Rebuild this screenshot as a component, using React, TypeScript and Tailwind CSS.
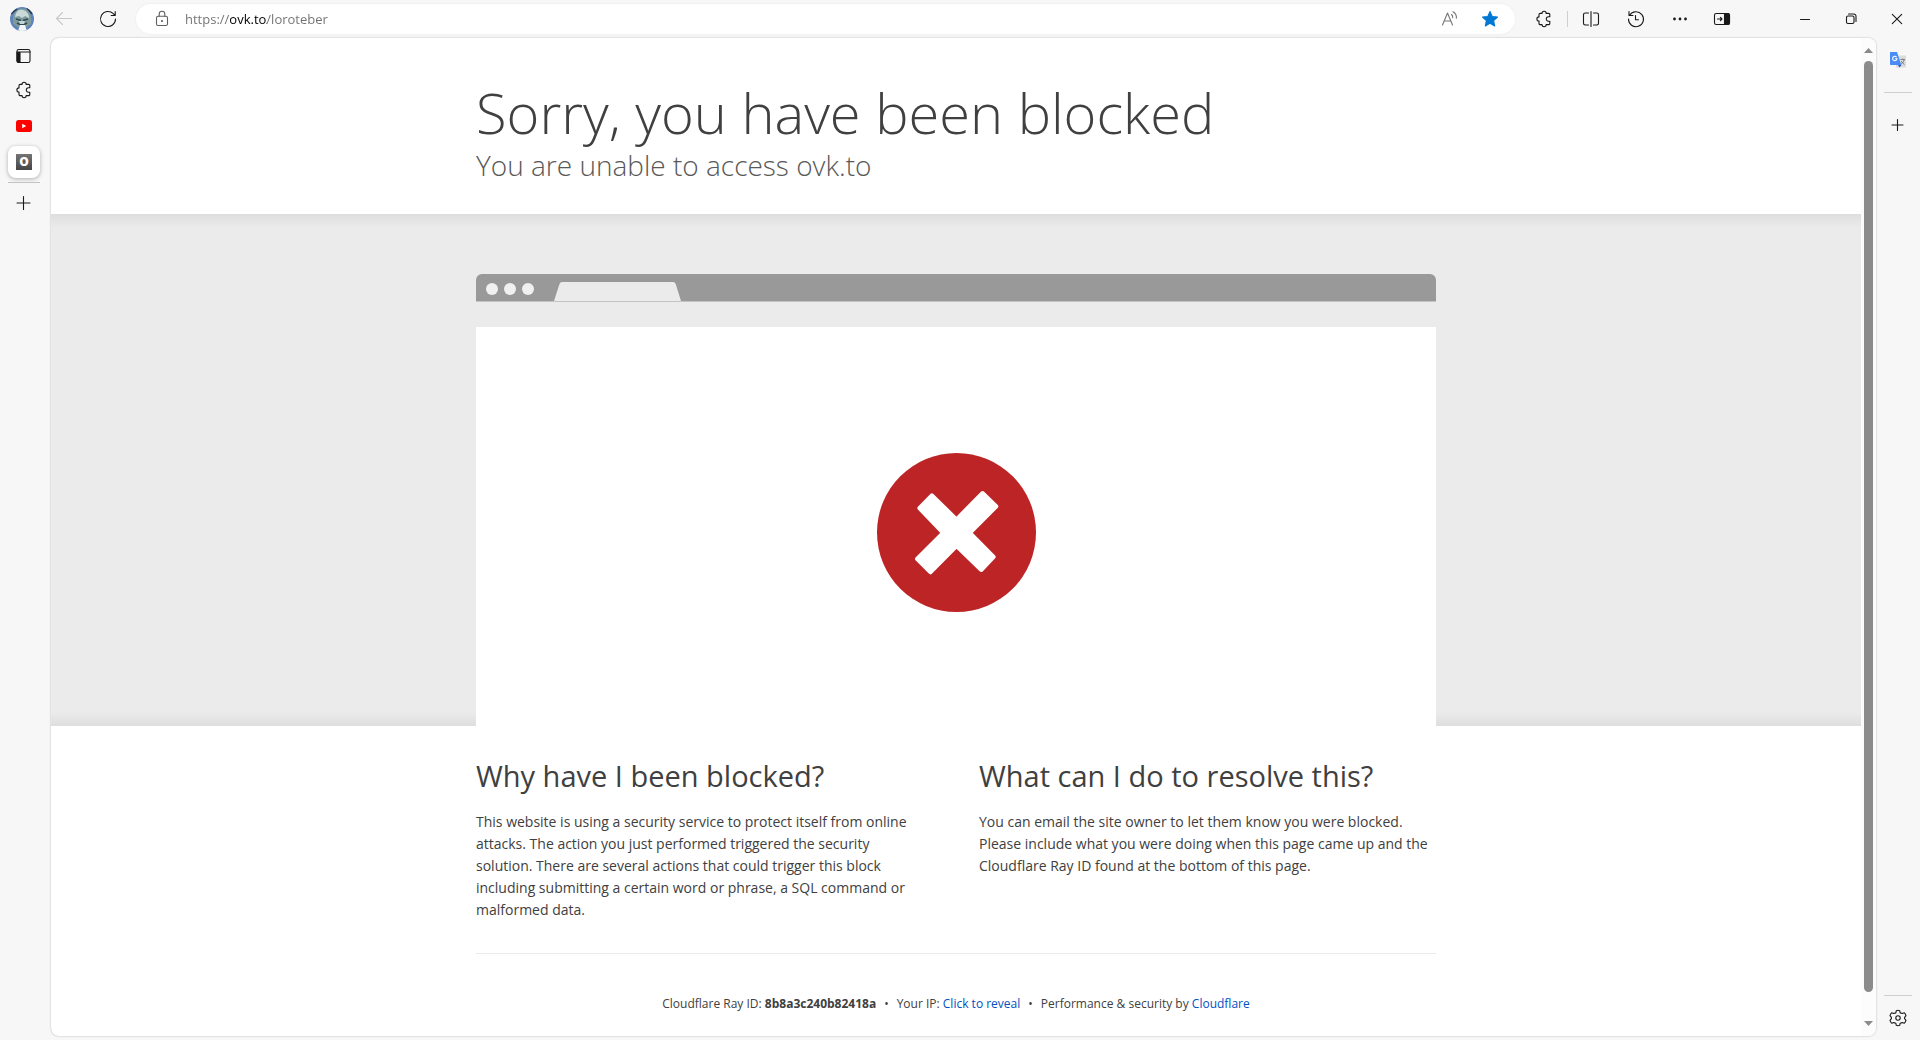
import React from 'react';

/* ── Toolbar icons (20px box) ────────────────────────────── */
const Icon = ({ children, className = '' }: { children: React.ReactNode; className?: string }) => (
  <svg
    width="20"
    height="20"
    viewBox="0 0 20 20"
    fill="none"
    stroke="currentColor"
    strokeWidth="1.1"
    strokeLinecap="round"
    strokeLinejoin="round"
    className={className}
    aria-hidden="true"
  >
    {children}
  </svg>
);

const PuzzleIcon = () => (
  <Icon>
    <path d="M8 4.400a2.100 2.100 0 0 1 4.200 0H14.600a1.200 1.200 0 0 1 1.200 1.200V7.800h-1.300a2.200 2.200 0 0 0 0 4.400h1.300v2.200a1.200 1.200 0 0 1-1.200 1.200h-2.400a2.100 2.100 0 0 1-4.200 0H6.200A1.200 1.200 0 0 1 5 14.400v-2.300a2.100 2.100 0 0 1 0-4.200V5.600a1.200 1.200 0 0 1 1.200-1.200z" />
  </Icon>
);

const Avatar = () => (
  <svg width="24" height="24" viewBox="0 0 24 24" aria-hidden="true">
    <defs>
      <clipPath id="avatar">
        <circle cx="12" cy="12" r="12" />
      </clipPath>
    </defs>
    <g clipPath="url(#avatar)">
      <rect width="24" height="24" fill="#5f83bd" />
      <path d="M3 17C2 9 4 2 12 1.5S22 9 21 17l-4 3H8z" fill="#7f9b9c" />
      <path d="M5 10C6 4 9 2 13 3s6 4 6 8l-4-2-3 2-3-2z" fill="#c9dad8" />
      <path d="M1 7l6-5M17 1l5 6" stroke="#27394d" strokeWidth="1.5" />
      <path d="M6 12l5 1.5M13 13.5l5-1.5M7 16c3 2 7 2 10 0" stroke="#2f4b52" strokeWidth="1.8" fill="none" />
      <path d="M9 14h6l-1 3h-4z" fill="#c4d5d4" />
      <path d="M8 24l2-6h5l2 6z" fill="#f3f6f6" />
    </g>
  </svg>
);

const TranslateIcon = () => (
  <svg width="16" height="16" viewBox="0 0 16 16" aria-hidden="true">
    <rect x="6" y="3.5" width="10" height="12" rx="0.5" fill="#dcdcdc" />
    <path
      d="M10.500 7.500h4.500M12.700 6.500v1M14.200 7.500c-.5 2.500-1.800 4-3.700 5M11.300 9c.6 1.500 1.700 2.700 3.200 3.500"
      stroke="#6f7a80"
      strokeWidth="0.9"
      fill="none"
    />
    <path d="M8 13h3.500L9.500 15.500z" fill="#2a56c6" />
    <path d="M.7 0H7l4.300 13H.7A.7.7 0 0 1 0 12.300V.7A.7.7 0 0 1 .7 0z" fill="#4a8cf7" />
    <path d="M6.600 5.200A2.200 2.200 0 1 0 7 6.700H4.900" stroke="#fff" strokeWidth="1.1" fill="none" />
  </svg>
);

/* ── Buttons ─────────────────────────────────────────────── */
const ToolButton = ({
  label,
  className,
  children,
}: {
  label: string;
  className: string;
  children: React.ReactNode;
}) => (
  <button type="button" aria-label={label} className={`flex shrink-0 items-center justify-center ${className}`}>
    {children}
  </button>
);

/* ── Top bar ─────────────────────────────────────────────── */
const Toolbar = () => (
  <header className="flex h-[38px] shrink-0 items-center pl-[10px]">
    <ToolButton label="Profile" className="mr-2">
      <Avatar />
    </ToolButton>
    <ToolButton label="Back" className="h-8 w-11 text-[#c8c8c8]">
      <Icon>
        <path d="M2.5 9.5h15M8.5 3.5l-6 6 6 6" />
      </Icon>
    </ToolButton>
    <ToolButton label="Refresh" className="h-8 w-11">
      <Icon>
        <path d="M17.5 10a7.5 7.5 0 1 1-2.200-5.300l1.700 1.600M17.200 2.500v4h-4" />
      </Icon>
    </ToolButton>

    <div className="ml-[6px] flex h-[30px] flex-1 items-center rounded-full bg-white pr-[5px] shadow-[0_0_3px_rgba(0,0,0,0.06)]">
      <ToolButton label="View site information" className="h-7 w-[49px] pl-[3px] text-[#5f5f5f]">
        <Icon>
          <rect x="4.500" y="7.300" width="11" height="9.200" rx="1.600" />
          <path d="M7.200 7.300V5a2.800 2.800 0 0 1 5.600 0v2.300" />
          <circle cx="10" cy="12" r="0.500" fill="currentColor" />
        </Icon>
      </ToolButton>
      {/* gradient stops give the host its darker tone */}
      <input
        type="text"
        aria-label="Address and search bar"
        defaultValue="https://ovk.to/loroteber"
        className="h-7 min-w-0 flex-1 bg-[linear-gradient(90deg,#707070_45px,#000_45px,#000_82px,#707070_82px)] bg-clip-text text-[13px] text-transparent outline-none"
      />
      <ToolButton label="Read aloud" className="h-7 w-10 text-[#767676]">
        <Icon>
          <path d="M2.500 16L7.500 4l5 12M4.300 12h6.400M11.500 5.500c.9.800 1.300 1.900 1.200 3.200M13 2.800c2.500 1.500 3.700 3.600 3.400 6.500" />
        </Icon>
      </ToolButton>
      <ToolButton label="Edit favorite" className="h-7 w-10 text-[#0078d4]">
        <Icon>
          <path
            d="M10 2.600l2.200 4.900 5.300.6-3.900 3.600 1.100 5.300-4.700-2.700L5.300 17l1.100-5.300-3.900-3.600 5.300-.6z"
            fill="currentColor"
          />
        </Icon>
      </ToolButton>
    </div>

    <ToolButton label="Extensions" className="ml-[6px] h-8 w-[46px]">
      <PuzzleIcon />
    </ToolButton>
    <div className="h-4 w-px bg-[#cfcfcf]" />
    <ToolButton label="Split screen" className="h-8 w-[46px]">
      <Icon>
        <path d="M10 2.500v15M7.500 4H4.200A1.700 1.700 0 0 0 2.500 5.700v8.600A1.700 1.700 0 0 0 4.200 16h3.300M12.500 4h3.300a1.700 1.700 0 0 1 1.700 1.700v8.600a1.700 1.700 0 0 1-1.700 1.700h-3.300" />
      </Icon>
    </ToolButton>
    <ToolButton label="History" className="h-8 w-11">
      <Icon>
        <path d="M3.600 6.300A7.500 7.500 0 1 1 2.500 10M3 2.500v4h4M9.500 6.500v4.200h3" />
      </Icon>
    </ToolButton>
    <ToolButton label="Settings and more" className="h-8 w-11">
      <Icon>
        <g fill="currentColor" stroke="none">
          <circle cx="4.500" cy="10" r="1.400" />
          <circle cx="10" cy="10" r="1.400" />
          <circle cx="15.500" cy="10" r="1.400" />
        </g>
      </Icon>
    </ToolButton>
    <ToolButton label="Hide sidebar" className="mr-10 h-8 w-10">
      <Icon>
        <rect x="2.500" y="4.500" width="15" height="11" rx="1.800" />
        <path d="M12.500 4.500h3.200a1.800 1.800 0 0 1 1.800 1.800v7.400a1.800 1.800 0 0 1-1.800 1.800h-3.200z" fill="currentColor" />
        <path d="M5.500 10h4.500M8.400 8.400L10 10l-1.600 1.600" />
      </Icon>
    </ToolButton>
    <ToolButton label="Minimize" className="h-8 w-[46px]">
      <Icon>
        <path d="M5.500 10.500h9" />
      </Icon>
    </ToolButton>
    <ToolButton label="Restore" className="h-8 w-[46px]">
      <Icon>
        <rect x="5.500" y="7" width="7.500" height="7.500" rx="1.500" />
        <path d="M7.500 5h5.300A2.200 2.200 0 0 1 15 7.200v5.300" />
      </Icon>
    </ToolButton>
    <ToolButton label="Close" className="h-8 w-[46px]">
      <Icon>
        <path d="M5.300 5.300l9.400 9.400M14.700 5.300l-9.400 9.400" />
      </Icon>
    </ToolButton>
  </header>
);

/* ── Vertical tabs ───────────────────────────────────────── */
const TabStrip = () => (
  <nav className="flex w-[51px] shrink-0 flex-col items-center pr-[3px]">
    <ToolButton label="Tab actions" className="mt-1 h-7 w-8">
      <Icon>
        <rect x="3" y="3.500" width="13" height="13" rx="1.800" />
        <path d="M3 6h13" />
        <path d="M3 6.500h3v10H4.800A1.800 1.800 0 0 1 3 14.700z" fill="currentColor" />
      </Icon>
    </ToolButton>
    <ToolButton label="Extensions" className="mt-[6px] h-7 w-8">
      <PuzzleIcon />
    </ToolButton>
    <ToolButton label="YouTube" className="mt-2 h-7 w-8">
      <svg width="16" height="12" viewBox="0 0 16 12" aria-hidden="true">
        <rect width="16" height="12" rx="2.5" fill="#f00" />
        <path d="M6.200 3.800v4.400L10.200 6z" fill="#fff" />
      </svg>
    </ToolButton>
    <ToolButton
      label="ovk.to"
      className="mt-[6px] h-8 w-8 rounded-lg bg-white shadow-[0_1px_4px_rgba(0,0,0,0.3)]"
    >
      <span className="flex h-4 w-4 items-center justify-center bg-linear-to-b from-[#757575] to-[#454545] text-xs leading-none font-extrabold text-white">
        O
      </span>
    </ToolButton>
    <div className="mt-1 h-px w-8 bg-[#c4c4c4]" />
    <ToolButton label="New tab" className="mt-[6px] h-7 w-8">
      <Icon>
        <path d="M9.500 3.500v13M3 10h13" />
      </Icon>
    </ToolButton>
  </nav>
);

/* ── Right sidebar ───────────────────────────────────────── */
const Sidebar = () => (
  <aside className="flex w-11 shrink-0 flex-col items-center">
    <ToolButton label="Google Translate" className="mt-2 h-7 w-8">
      <TranslateIcon />
    </ToolButton>
    <div className="mt-[18px] h-px w-7 bg-[#cfcfcf]" />
    <ToolButton label="Customize" className="mt-[18px] h-7 w-8">
      <Icon>
        <path d="M9.500 4.500v11M4 10h11" />
      </Icon>
    </ToolButton>
    <div className="mt-auto h-px w-7 bg-[#cfcfcf]" />
    <ToolButton label="Settings" className="mt-2 mb-1 h-7 w-8">
      <Icon>
        <circle cx="10" cy="10" r="2.200" />
        <path d="M8.300 2.700Q10 1.900 11.700 2.700L12.200 4.900 14.300 5.500 16.200 4.700Q17.500 5.800 18 7.700L16.600 9.300V10.700L18 12.300Q17.500 14.200 16.200 15.300L14.200 14.600 12.200 15.200 11.700 17.300Q10 18.100 8.300 17.300L7.800 15.200 5.800 14.600 3.800 15.300Q2.500 14.200 2 12.300L3.400 10.700V9.300L2 7.700Q2.500 5.800 3.800 4.700L5.700 5.500 7.800 4.900z" />
      </Icon>
    </ToolButton>
  </aside>
);

const Scrollbar = () => (
  <div className="flex w-[15px] shrink-0 flex-col items-center bg-[#fcfcfc] pt-[10px] pb-[10px]" aria-hidden="true">
    <svg width="9" height="5" viewBox="0 0 9 5">
      <path d="M4.500 0L9 5H0z" fill="#8b8b8b" />
    </svg>
    <div className="mt-2 mb-[29px] w-[9px] flex-1 rounded-full bg-[#8b8b8b]" />
    <svg width="9" height="5" viewBox="0 0 9 5">
      <path d="M4.500 5L0 0h9z" fill="#8b8b8b" />
    </svg>
  </div>
);

/* ── Blocked page ────────────────────────────────────────── */
const BrowserMock = () => (
  <div className="mx-auto w-full max-w-[960px]">
    <div className="flex h-7 items-end rounded-t-md border-b border-[#c4c4c4] bg-[#999]">
      <div className="flex gap-[6px] pb-[6px] pl-[10px]">
        <span className="h-3 w-3 rounded-full bg-[#f0f0f0]" />
        <span className="h-3 w-3 rounded-full bg-[#f0f0f0]" />
        <span className="h-3 w-3 rounded-full bg-[#f0f0f0]" />
      </div>
      <svg width="128" height="19" viewBox="0 0 128 19" className="ml-5" aria-hidden="true">
        <path d="M0 19L5.500 2Q6.200 0 8 0H119Q121 0 121.700 2L127 19z" fill="#ebebeb" />
      </svg>
    </div>
    <div className="mt-[25px] flex h-[399px] justify-center bg-white pt-[126px]">
      <svg width="159" height="159" viewBox="108 71 476 476" aria-hidden="true">
        <circle cx="346" cy="309" r="238" fill="#bd2426" />
        <path
          d="M272 199L346 271 424 192 464 231 385 310 456 382 420 420 346 348 268 427 229 388 307 310 236 236z"
          fill="#fff"
          stroke="#fff"
          strokeWidth="14"
          strokeLinejoin="round"
        />
      </svg>
    </div>
  </div>
);

const BlockedPage = () => (
  <div className="min-w-0 flex-1 text-[#404040]">
    <div className="mx-auto h-[176px] max-w-[960px] pt-[38px]">
      <h1 className="text-[56px] leading-[72px] font-light">Sorry, you have been blocked</h1>
      <h2 className="text-[28px] leading-[34px] font-light text-[#595959]">You are unable to access ovk.to</h2>
    </div>

    <section className="bg-[linear-gradient(180deg,#dedede_0px,#ebebeb_14px,#ebebeb_calc(100%-14px),#dedede_100%)] pt-[60px]">
      <BrowserMock />
    </section>

    <div className="mx-auto max-w-[960px]">
      <section className="grid grid-cols-2 gap-[46px] border-b border-[#ebebeb] pt-[31px] pb-8">
        <div>
          <h2 className="text-[29px] leading-[38px]">Why have I been blocked?</h2>
          <p className="mt-4 pr-3 text-[14px] leading-[22px]">
            This website is using a security service to protect itself from online attacks. The action you just
            performed triggered the security solution. There are several actions that could trigger this block
            including submitting a certain word or phrase, a SQL command or malformed data.
          </p>
        </div>
        <div>
          <h2 className="text-[29px] leading-[38px]">What can I do to resolve this?</h2>
          <p className="mt-4 text-[14px] leading-[22px]">
            You can email the site owner to let them know you were blocked. Please include what you were doing when
            this page came up and the Cloudflare Ray ID found at the bottom of this page.
          </p>
        </div>
      </section>

      <footer className="flex justify-center gap-2 pt-10 text-[12px] leading-[20px]">
        <span>
          Cloudflare Ray ID: <strong className="font-bold">8b8a3c240b82418a</strong>
        </span>
        <span>•</span>
        <span>
          Your IP:{' '}
          <button type="button" className="text-[#0051c3]">
            Click to reveal
          </button>
        </span>
        <span>•</span>
        <span>
          Performance &amp; security by{' '}
          <a href="#cloudflare" className="text-[#0051c3]">
            Cloudflare
          </a>
        </span>
      </footer>
    </div>
  </div>
);

export default function App() {
  return (
    <div className="flex h-screen flex-col bg-[#f7f7f7] font-['Open_Sans','Noto_Sans',sans-serif] text-[#1a1a1a]">
      <Toolbar />
      <div className="flex min-h-0 flex-1 pb-1">
        <TabStrip />
        <main className="flex min-w-0 flex-1 overflow-hidden rounded-lg bg-white shadow-[0_0_2px_rgba(0,0,0,0.3)]">
          <BlockedPage />
          <Scrollbar />
        </main>
        <Sidebar />
      </div>
    </div>
  );
}
